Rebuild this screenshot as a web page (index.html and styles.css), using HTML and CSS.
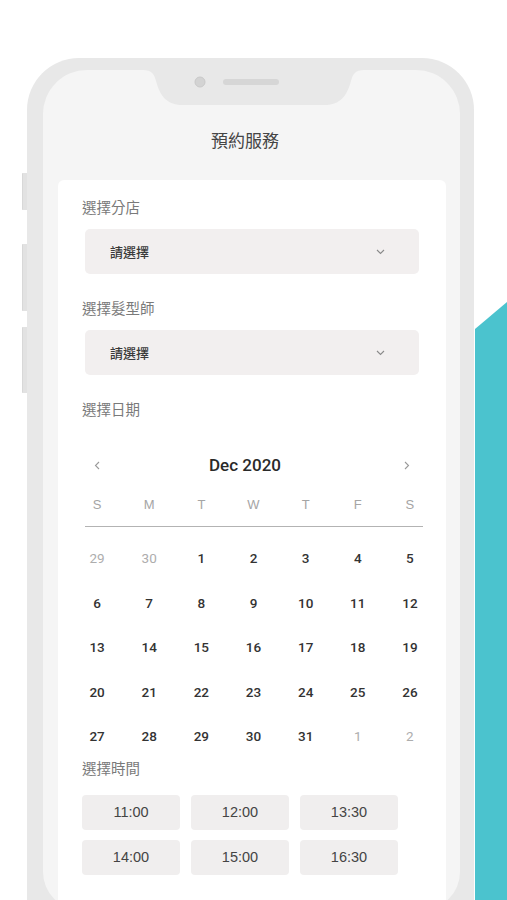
FILE: index.html
```html
<!DOCTYPE html>
<html lang="zh-Hant">
<head>
<meta charset="utf-8">
<title>預約服務</title>
<link rel="stylesheet" href="styles.css">
</head>
<body>
<div class="stage">
  <div class="side-keys">
    <span class="key key-1"></span>
    <span class="key key-2"></span>
    <span class="key key-3"></span>
  </div>
  <div class="phone">
    <div class="screen">
      <svg class="notch" width="221" height="35" viewBox="0 0 221 35" aria-hidden="true">
        <path d="M0,0 H221 C212,0 210,4 208,11 C204,26 197,35 182,35 H39 C24,35 17,26 13,11 C11,4 9,0 0,0 Z" fill="#e8e8e8"/>
        <circle cx="57" cy="12" r="5" fill="#d3d3d3" stroke="#c9c9c9" stroke-width="1"/>
        <rect x="80" y="9" width="56" height="6" rx="3" fill="#d6d6d6"/>
      </svg>
      <header class="title">預約服務</header>
      <main class="card">
        <div class="label">選擇分店</div>
        <div class="select">
          <span>請選擇</span>
          <svg class="chev" width="9" height="6" viewBox="0 0 9 6"><polyline points="1,1 4.5,4.5 8,1" fill="none" stroke="#8a8a8a" stroke-width="1.1"/></svg>
        </div>
        <div class="label gap">選擇髮型師</div>
        <div class="select">
          <span>請選擇</span>
          <svg class="chev" width="9" height="6" viewBox="0 0 9 6"><polyline points="1,1 4.5,4.5 8,1" fill="none" stroke="#8a8a8a" stroke-width="1.1"/></svg>
        </div>
        <div class="label gap">選擇日期</div>
        <section class="cal">
          <div class="cal-head">
            <svg class="nav" width="6" height="9" viewBox="0 0 6 9"><polyline points="5,1 1.5,4.5 5,8" fill="none" stroke="#9a9a9a" stroke-width="1.1"/></svg>
            <span class="month">Dec 2020</span>
            <svg class="nav" width="6" height="9" viewBox="0 0 6 9"><polyline points="1,1 4.5,4.5 1,8" fill="none" stroke="#9a9a9a" stroke-width="1.1"/></svg>
          </div>
          <div class="weekdays">
            <span>S</span><span>M</span><span>T</span><span>W</span><span>T</span><span>F</span><span>S</span>
          </div>
          <div class="rule"></div>
          <div class="days">
            <span class="muted">29</span><span class="muted">30</span><span>1</span><span>2</span><span>3</span><span>4</span><span>5</span>
            <span>6</span><span>7</span><span>8</span><span>9</span><span>10</span><span>11</span><span>12</span>
            <span>13</span><span>14</span><span>15</span><span>16</span><span>17</span><span>18</span><span>19</span>
            <span>20</span><span>21</span><span>22</span><span>23</span><span>24</span><span>25</span><span>26</span>
            <span>27</span><span>28</span><span>29</span><span>30</span><span>31</span><span class="muted">1</span><span class="muted">2</span>
          </div>
        </section>
        <div class="label tight">選擇時間</div>
        <div class="times">
          <span class="slot">11:00</span>
          <span class="slot">12:00</span>
          <span class="slot">13:30</span>
          <span class="slot">14:00</span>
          <span class="slot">15:00</span>
          <span class="slot">16:30</span>
        </div>
      </main>
    </div>
  </div>
  <div class="accent"></div>
</div>
</body>
</html>
```
FILE: styles.css
```css
* { box-sizing: border-box; }

html, body {
  margin: 0;
  padding: 0;
  background: #ffffff;
}

body {
  font-family: "Noto Sans CJK TC", "Noto Sans", sans-serif;
  color: #333;
}

.stage {
  display: flex;
  height: 900px;
  overflow: hidden;
  background: #ffffff;
}

.side-keys {
  width: 5px;
  margin-left: 22px;
  padding-top: 173px;
  display: flex;
  flex-direction: column;
  flex-shrink: 0;
}

.key {
  display: block;
  width: 5px;
  background: #e2e2e2;
  border-left: 1px solid #d8d8d8;
  border-radius: 1px 0 0 1px;
}

.key-1 { height: 37px; }
.key-2 { height: 67px; margin-top: 34px; }
.key-3 { height: 66px; margin-top: 16px; }

.phone {
  width: 447px;
  height: 900px;
  margin-top: 58px;
  margin-right: 1px;
  flex-shrink: 0;
  padding: 12px 14px 0 16px;
  background: #e8e8e8;
  border-radius: 52px 52px 0 0;
}

.screen {
  position: relative;
  height: 840px;
  background: #f5f5f5;
  border-radius: 44px 44px 38px 38px;
  display: flex;
  flex-direction: column;
  overflow: hidden;
}

.notch {
  position: absolute;
  top: 0;
  left: 100px;
}

.title {
  height: 110px;
  padding-top: 58px;
  padding-right: 13px;
  text-align: center;
  font-size: 17px;
  line-height: 24px;
  color: #454545;
  flex-shrink: 0;
}

.card {
  flex: 1;
  margin: 0 14px 0 15px;
  padding: 17px 24px 0 24px;
  background: #ffffff;
  border-radius: 6px 6px 0 0;
}

.label {
  font-size: 14.5px;
  line-height: 20px;
  color: #7a7a7a;
}

.label.gap { margin-top: 24px; }

.label.tight {
  line-height: 18px;
}

.select {
  display: flex;
  align-items: center;
  justify-content: space-between;
  height: 45px;
  margin: 12px 3px 0 3px;
  padding: 0 34px 0 25px;
  background: #f2efef;
  border-radius: 5px;
  font-size: 13px;
  font-weight: 500;
  color: #3a3a3a;
}

.cal {
  margin: 31px -14px 0 -11px;
}

.cal-head {
  display: grid;
  grid-template-columns: 52px 1fr 52px;
  align-items: center;
  justify-items: center;
  height: 30px;
}

.month {
  font-family: "Roboto", "Liberation Sans", sans-serif;
  font-weight: 500;
  font-size: 17px;
  color: #2a2a2a;
  padding-right: 17px;
}

.nav:last-child { margin-right: 6px; }

.weekdays {
  display: grid;
  grid-template-columns: repeat(7, 1fr);
  margin-top: 15px;
  height: 20px;
  line-height: 20px;
  text-align: center;
  font-family: "Liberation Sans", sans-serif;
  font-size: 13px;
  color: #a5a5a5;
}

.rule {
  height: 1px;
  margin: 11px 13px 0 14px;
  background: #b3b3b3;
}

.days {
  display: grid;
  grid-template-columns: repeat(7, 1fr);
  grid-auto-rows: 44.5px;
  margin-top: 9px;
  align-items: center;
  text-align: center;
  font-family: "Roboto", "Liberation Sans", sans-serif;
  font-weight: 500;
  font-size: 13.5px;
  color: #333;
}

.days .muted {
  color: #adadad;
  font-weight: 400;
}

.times {
  display: grid;
  grid-template-columns: repeat(3, 98px);
  grid-auto-rows: 35px;
  gap: 10px 11px;
  margin-top: 18px;
}

.slot {
  display: flex;
  align-items: center;
  justify-content: center;
  background: #f0eeee;
  border-radius: 4px;
  font-family: "Liberation Sans", sans-serif;
  font-size: 14.5px;
  color: #444;
}

.accent {
  flex: 1;
  background: #4bc3ce;
  clip-path: polygon(100% 302px, 0 329px, 0 100%, 100% 100%);
}
```
